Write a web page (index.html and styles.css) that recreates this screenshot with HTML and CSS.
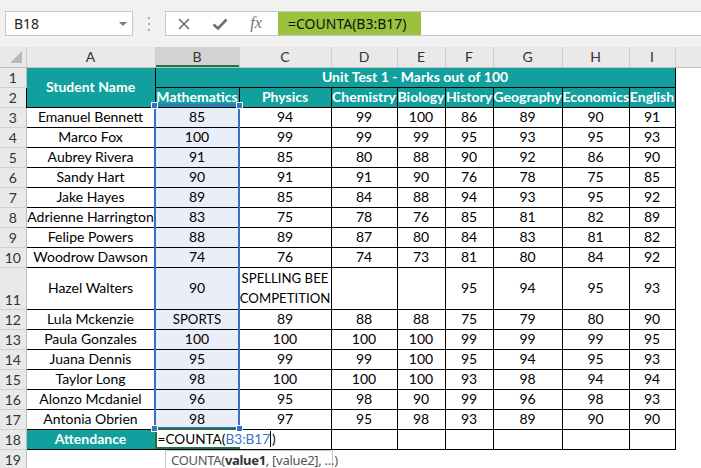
FILE: index.html
```html
<!DOCTYPE html>
<html lang="en">
<head>
    <meta charset="UTF-8">
    <title>COUNTA - Marks</title>
    <link rel="stylesheet" href="styles.css">
</head>
<body>
    <div class="toolbar">
        <div class="namebox">
            <span>B18</span>
            <span class="drop"></span>
        </div>
        <div class="dots"><i></i><i></i><i></i></div>
        <div class="formula">
            <span class="fbtn">
                <svg width="14" height="14" viewBox="0 0 14 14"><path d="M2 2L12 12M12 2L2 12" stroke="#6f6f6f" stroke-width="1.6" fill="none"/></svg>
            </span>
            <span class="fbtn">
                <svg width="16" height="14" viewBox="0 0 16 14"><path d="M1.5 7.5L6 11.5L14.5 2.5" stroke="#6f6f6f" stroke-width="2.6" fill="none"/></svg>
            </span>
            <span class="fbtn fx">fx</span>
            <div class="fvalue">=COUNTA(B3:B17)</div>
        </div>
    </div>

    <div class="sheet">
        <table class="grid">
            <colgroup>
                <col class="w-hdr"><col class="w-a"><col class="w-b"><col class="w-c"><col class="w-d">
                <col class="w-e"><col class="w-f"><col class="w-g"><col class="w-h"><col class="w-i"><col class="w-rest">
            </colgroup>
            <tr class="colhdr">
                <th class="corner">
                    <svg width="26" height="19" viewBox="0 0 26 19"><path d="M22 4L22 16L10 16Z" fill="#b9b9b9"/></svg>
                </th>
                <th>A</th><th class="cur">B</th><th>C</th><th>D</th><th>E</th><th>F</th><th>G</th><th>H</th><th>I</th><th></th>
            </tr>
            <tr>
                <th class="rh">1</th>
                <td class="head" rowspan="2">Student Name</td>
                <td class="head" colspan="8">Unit Test 1 - Marks out of 100</td>
                <td class="blank"></td>
            </tr>
            <tr>
                <th class="rh">2</th>
                <td class="head">Mathematics</td><td class="head">Physics</td><td class="head">Chemistry</td><td class="head">Biology</td>
                <td class="head">History</td><td class="head">Geography</td><td class="head">Economics</td><td class="head">English</td>
                <td class="blank"></td>
            </tr>
            <tr><th class="rh">3</th><td>Emanuel Bennett</td><td class="sel">85</td><td>94</td><td>99</td><td>100</td><td>86</td><td>89</td><td>90</td><td>91</td><td class="blank"></td></tr>
            <tr><th class="rh">4</th><td>Marco Fox</td><td class="sel">100</td><td>99</td><td>99</td><td>99</td><td>95</td><td>93</td><td>95</td><td>93</td><td class="blank"></td></tr>
            <tr><th class="rh">5</th><td>Aubrey Rivera</td><td class="sel">91</td><td>85</td><td>80</td><td>88</td><td>90</td><td>92</td><td>86</td><td>90</td><td class="blank"></td></tr>
            <tr><th class="rh">6</th><td>Sandy Hart</td><td class="sel">90</td><td>91</td><td>91</td><td>90</td><td>76</td><td>78</td><td>75</td><td>85</td><td class="blank"></td></tr>
            <tr><th class="rh">7</th><td>Jake Hayes</td><td class="sel">89</td><td>85</td><td>84</td><td>88</td><td>94</td><td>93</td><td>95</td><td>92</td><td class="blank"></td></tr>
            <tr><th class="rh">8</th><td>Adrienne Harrington</td><td class="sel">83</td><td>75</td><td>78</td><td>76</td><td>85</td><td>81</td><td>82</td><td>89</td><td class="blank"></td></tr>
            <tr><th class="rh">9</th><td>Felipe Powers</td><td class="sel">88</td><td>89</td><td>87</td><td>80</td><td>84</td><td>83</td><td>81</td><td>82</td><td class="blank"></td></tr>
            <tr><th class="rh">10</th><td>Woodrow Dawson</td><td class="sel">74</td><td>76</td><td>74</td><td>73</td><td>81</td><td>80</td><td>84</td><td>92</td><td class="blank"></td></tr>
            <tr class="tall"><th class="rh">11</th><td>Hazel Walters</td><td class="sel">90</td><td class="wrap caps">SPELLING BEE<br>COMPETITION</td><td></td><td></td><td>95</td><td>94</td><td>95</td><td>93</td><td class="blank"></td></tr>
            <tr><th class="rh">12</th><td>Lula Mckenzie</td><td class="sel caps">SPORTS</td><td>89</td><td>88</td><td>88</td><td>75</td><td>79</td><td>80</td><td>90</td><td class="blank"></td></tr>
            <tr><th class="rh">13</th><td>Paula Gonzales</td><td class="sel">100</td><td>100</td><td>100</td><td>100</td><td>99</td><td>99</td><td>99</td><td>95</td><td class="blank"></td></tr>
            <tr><th class="rh">14</th><td>Juana Dennis</td><td class="sel">95</td><td>99</td><td>99</td><td>100</td><td>95</td><td>94</td><td>95</td><td>93</td><td class="blank"></td></tr>
            <tr><th class="rh">15</th><td>Taylor Long</td><td class="sel">98</td><td>100</td><td>100</td><td>100</td><td>93</td><td>98</td><td>94</td><td>94</td><td class="blank"></td></tr>
            <tr><th class="rh">16</th><td>Alonzo Mcdaniel</td><td class="sel">96</td><td>95</td><td>98</td><td>90</td><td>99</td><td>96</td><td>98</td><td>93</td><td class="blank"></td></tr>
            <tr><th class="rh">17</th><td>Antonia Obrien</td><td class="sel">98</td><td>97</td><td>95</td><td>98</td><td>93</td><td>89</td><td>90</td><td>90</td><td class="blank"></td></tr>
            <tr>
                <th class="rh">18</th>
                <td class="head">Attendance</td>
                <td class="editing"><span class="edit-text">=COUNTA(<span class="ref">B3:B17</span><span class="cursor"></span>)</span></td>
                <td></td><td></td><td></td><td></td><td></td><td></td><td></td><td class="blank"></td>
            </tr>
            <tr class="last">
                <th class="rh">19</th>
                <td class="blank"></td><td class="blank"></td><td class="blank"></td><td class="blank"></td><td class="blank"></td>
                <td class="blank"></td><td class="blank"></td><td class="blank"></td><td class="blank"></td><td class="blank"></td>
            </tr>
        </table>

        <!-- range highlight for B3:B17 and the active cell -->
        <div class="range"></div>
        <div class="active"></div>
        <span class="handle h-tl"></span>
        <span class="handle h-tr"></span>
        <span class="handle h-bl"></span>
        <span class="handle h-br"></span>

        <div class="tip">COUNTA(<b>value1</b>, [value2], ...)</div>
    </div>
</body>
</html>
```

FILE: styles.css
```css
* {
    margin: 0;
    padding: 0;
    box-sizing: border-box;
}

html, body {
    width: 701px;
    height: 468px;
    overflow: hidden;
    background-color: #ffffff;
    font-family: 'Lato', 'Liberation Sans', sans-serif;
}

/* Formula bar */
.toolbar {
    display: flex;
    align-items: flex-start;
    height: 47px;
    padding: 11px 0 0 5px;
    background-color: #f1f1f1;
    font-family: 'Noto Sans', 'Liberation Sans', sans-serif;
}

.namebox {
    display: flex;
    align-items: center;
    width: 128px;
    height: 25px;
    padding: 0 5px 0 8px;
    background-color: #fff;
    border: 1px solid #c6c6c6;
    font-size: 14px;
    color: #222;
}

.drop {
    margin-left: auto;
    border-left: 4px solid transparent;
    border-right: 4px solid transparent;
    border-top: 4px solid #7a7a7a;
}

.dots {
    display: flex;
    flex-direction: column;
    align-items: center;
    gap: 4px;
    width: 32px;
    padding-top: 6px;
}

.dots i {
    width: 2px;
    height: 2px;
    background-color: #a9a9a9;
}

.formula {
    flex: 1;
    display: flex;
    align-items: stretch;
    height: 25px;
    background-color: #fff;
    border: 1px solid #c6c6c6;
    border-right: none;
}

.fbtn {
    display: flex;
    align-items: center;
    justify-content: center;
    width: 36px;
}

.fx {
    font-family: 'Liberation Serif', serif;
    font-style: italic;
    font-size: 16px;
    color: #6f6f6f;
    padding-bottom: 2px;
}

.fvalue {
    display: flex;
    align-items: center;
    width: 143px;
    margin-left: 4px;
    padding-left: 10px;
    background-color: #9bc23c;
    font-size: 14px;
    color: #111;
}

/* Sheet */
.sheet {
    position: relative;
}

.grid {
    border-collapse: collapse;
    table-layout: fixed;
    width: 701px;
    font-size: 14px;
    color: #000;
}

.w-hdr { width: 26px; }
.w-a { width: 129px; }
.w-b { width: 84px; }
.w-c { width: 92px; }
.w-d { width: 66px; }
.w-e { width: 48px; }
.w-f { width: 48px; }
.w-g { width: 69px; }
.w-h { width: 67px; }
.w-i { width: 46px; }
.w-rest { width: 26px; }

.grid tr {
    height: 20px;
}

.grid tr.tall {
    height: 42px;
}

.grid td {
    border: 1px solid #000;
    text-align: center;
    vertical-align: middle;
    white-space: nowrap;
    line-height: 18px;
    padding: 0;
    overflow: visible;
}

.grid td.blank {
    border: none;
}

.colhdr {
    height: 19px;
}

.colhdr th {
    height: 19px;
    background-color: #e9e9e9;
    border-right: 1px solid #cfcfcf;
    border-bottom: 1px solid #bdbdbd;
    font-weight: normal;
    font-size: 14px;
    color: #333;
    text-align: center;
    vertical-align: middle;
}

.colhdr th.cur {
    background-color: #d3d3d3;
    box-shadow: inset 0 -2px 0 #217346;
}

.colhdr th.corner {
    padding: 0;
    line-height: 0;
}

.rh {
    background-color: #e9e9e9;
    border-right: 1px solid #bdbdbd;
    border-bottom: 1px solid #cfcfcf;
    font-weight: normal;
    font-size: 14px;
    color: #333;
    text-align: center;
    vertical-align: bottom;
    line-height: 18px;
}

.grid td.head {
    background-color: #11a09e;
    color: #fff;
    font-weight: bold;
}

.grid td.sel {
    background-color: #e9eef8;
}

.grid td.caps {
    font-size: 13.2px;
}

.grid td.wrap {
    line-height: 20px;
}

.grid td.editing {
    text-align: left;
    padding-left: 2px;
}

.edit-text {
    position: relative;
    z-index: 2;
    background-color: #fff;
    padding-right: 1px;
    font-size: 13.6px;
}

.ref {
    color: #3c6fc7;
}

.cursor {
    display: inline-block;
    width: 1px;
    height: 16px;
    margin: 0 1px 0 0;
    vertical-align: -3px;
    background-color: #000;
}

/* Overlays: reference range, active cell, handles, tooltip */
.range {
    position: absolute;
    left: 154px;
    top: 57px;
    width: 86px;
    height: 325px;
    border: 2px solid #3a6fc8;
    pointer-events: none;
}

.active {
    position: absolute;
    left: 155px;
    top: 381px;
    width: 85px;
    height: 21px;
    border: 2px solid #217346;
    border-right: none;
    z-index: 3;
    pointer-events: none;
}

.handle {
    position: absolute;
    width: 7px;
    height: 7px;
    background-color: #3a6fc8;
    border: 1px solid #fff;
    z-index: 4;
}

.h-tl { left: 151px; top: 55px; }
.h-tr { left: 236px; top: 55px; }
.h-bl { left: 151px; top: 378px; }
.h-br { left: 236px; top: 378px; }

.tip {
    position: absolute;
    left: 165px;
    top: 403px;
    width: 168px;
    height: 22px;
    padding: 0 0 0 5px;
    background-color: #fff;
    border: 1px solid #c6c6c6;
    font-family: 'Noto Sans', 'Liberation Sans', sans-serif;
    font-size: 13px;
    letter-spacing: -0.3px;
    color: #555;
    white-space: nowrap;
    z-index: 5;
}

.tip b {
    color: #333;
}
```
